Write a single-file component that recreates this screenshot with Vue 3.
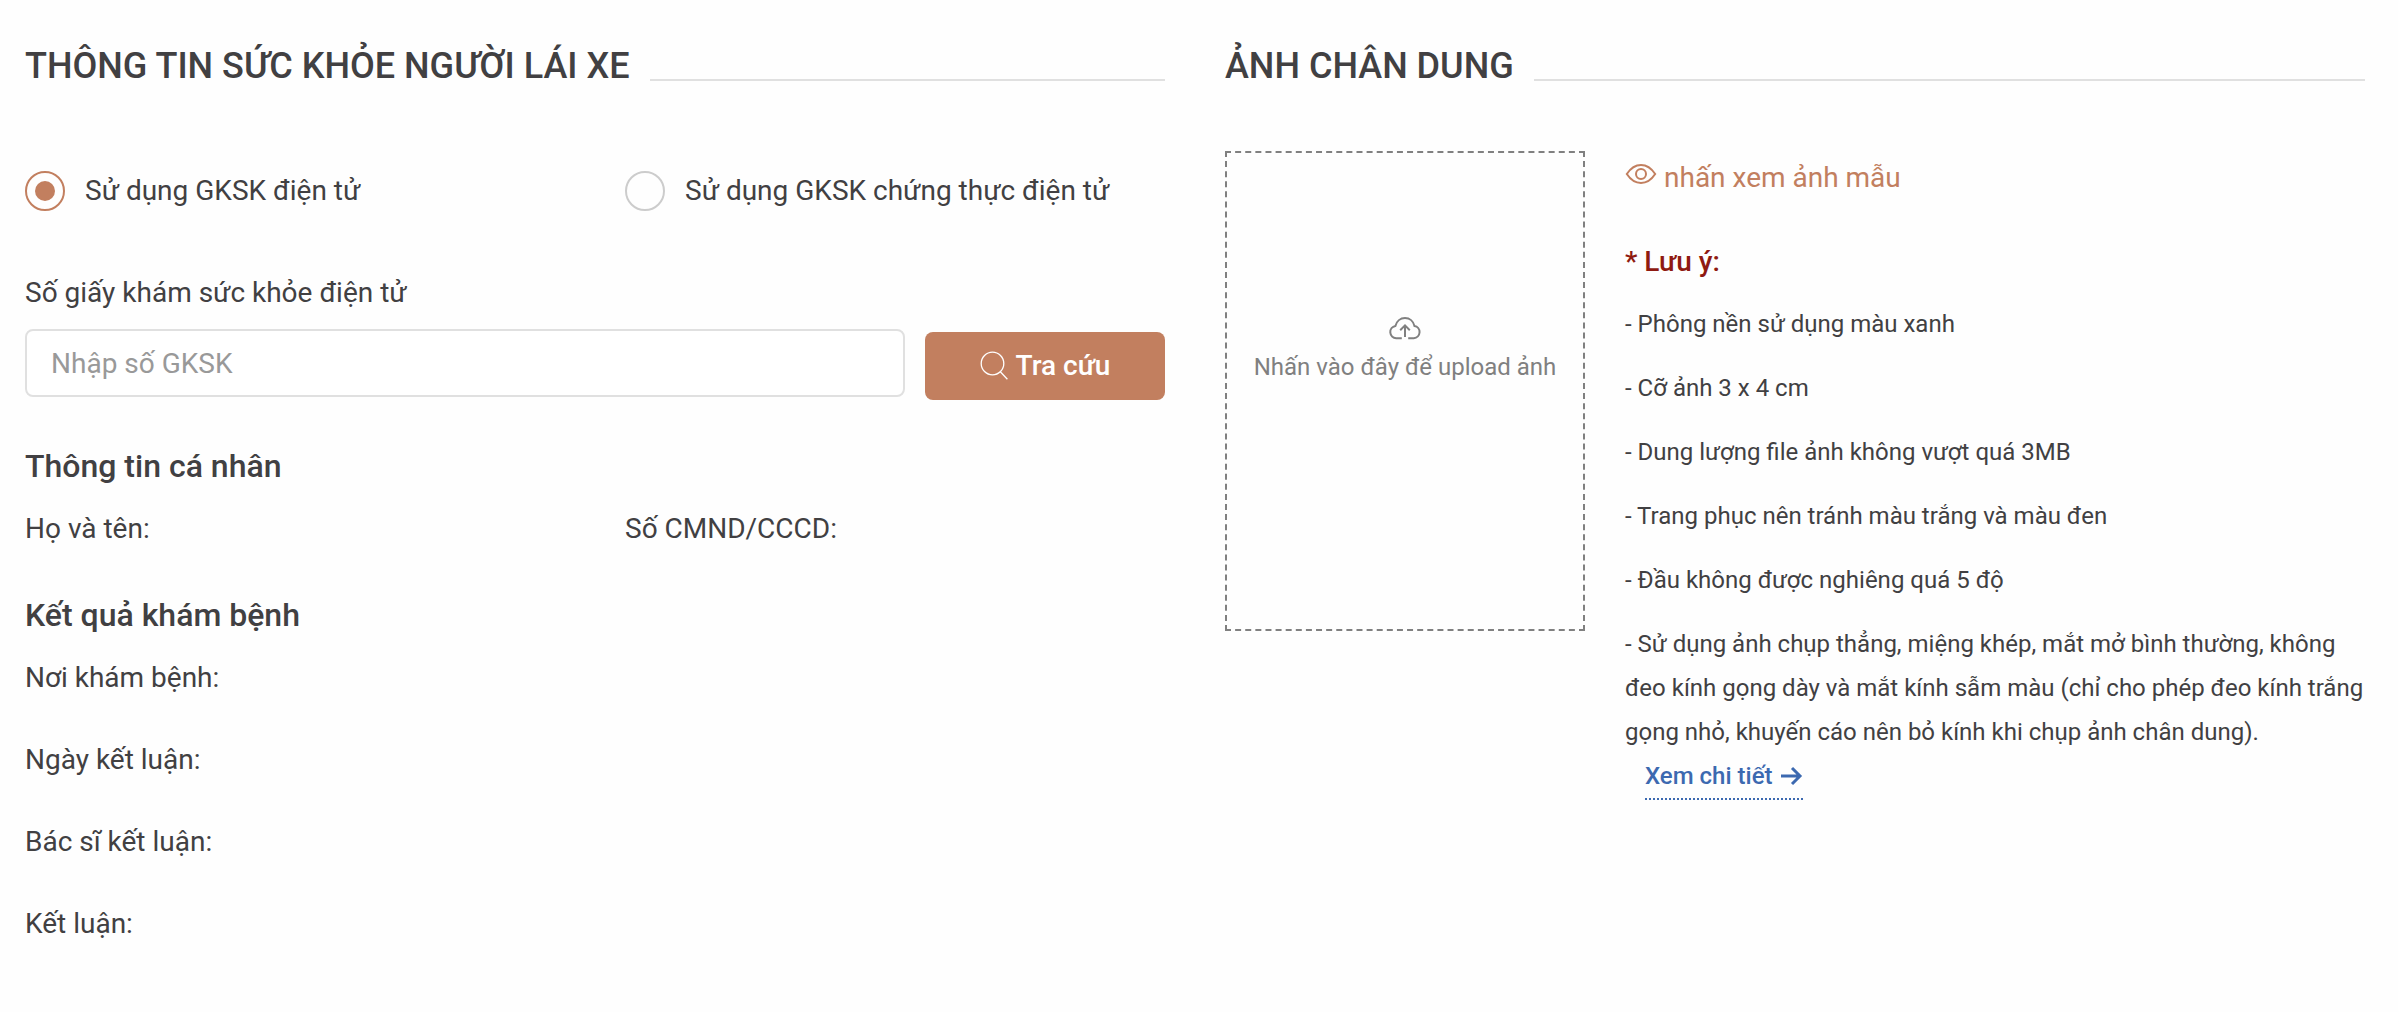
<template>
  <div class="health-page">
    <section>
      <div class="section-title">
        <h2>THÔNG TIN SỨC KHỎE NGƯỜI LÁI XE</h2>
        <span class="line"></span>
      </div>

      <div class="two-cols radios">
        <label v-for="item in types" :key="item.value" class="radio">
          <input v-model="type" type="radio" name="type" :value="item.value" />
          <span>{{ item.label }}</span>
        </label>
      </div>

      <form class="search" @submit.prevent>
        <div class="field">
          <label for="gksk">Số giấy khám sức khỏe điện tử</label>
          <input id="gksk" v-model="code" type="text" placeholder="Nhập số GKSK" />
        </div>
        <button type="submit" class="btn-search">
          <svg width="28" height="30" viewBox="0 0 28 30" aria-hidden="true">
            <circle cx="12.5" cy="12.5" r="11.3" />
            <path d="M20.3 20.8L27.4 28.2" />
          </svg>
          Tra cứu
        </button>
      </form>

      <h3>Thông tin cá nhân</h3>
      <div class="two-cols">
        <p>Họ và tên:</p>
        <p>Số CMND/CCCD:</p>
      </div>

      <h3>Kết quả khám bệnh</h3>
      <div class="results">
        <p v-for="text in results" :key="text">{{ text }}</p>
      </div>
    </section>

    <section>
      <div class="section-title">
        <h2>ẢNH CHÂN DUNG</h2>
        <span class="line"></span>
      </div>

      <div class="portrait">
        <label class="upload">
          <input type="file" accept="image/*" />
          <svg width="32" height="24" viewBox="0 0 32 24" aria-hidden="true">
            <path
              d="M12.8 21.2H7.2A6.2 6.2 0 0 1 6.4 8.9C7.6 4.2 11.4 1 16 1s8.4 3.2 9.4 7.9a6.2 6.2 0 0 1-.6 12.3h-5.6"
            />
            <path d="M16 20V8.6M11.2 13.2L16 8.4l4.8 4.8" />
          </svg>
          <span>Nhấn vào đây để upload ảnh</span>
        </label>

        <div class="guide">
          <button type="button" class="btn-sample">
            <svg width="32" height="32" viewBox="0 0 32 32" aria-hidden="true">
              <path d="M1.8 16C5.8 10 10.6 7 16 7s10.2 3 14.2 9C26.2 22 21.4 25 16 25S5.8 22 1.8 16z" />
              <circle cx="16" cy="16" r="5" />
            </svg>
            nhấn xem ảnh mẫu
          </button>
          <p class="note">* Lưu ý:</p>
          <ul>
            <li v-for="rule in rules" :key="rule">- {{ rule }}</li>
          </ul>
          <a href="#" class="detail">
            Xem chi tiết
            <svg width="23" height="20" viewBox="0 0 23 20" aria-hidden="true">
              <path d="M1 10h19M12 2l8 8-8 8" />
            </svg>
          </a>
        </div>
      </div>
    </section>
  </div>
</template>

<script setup>
import { ref } from "vue";

const type = ref("electronic");
const code = ref("");

const types = [
  { value: "electronic", label: "Sử dụng GKSK điện tử" },
  { value: "certified", label: "Sử dụng GKSK chứng thực điện tử" },
];

const results = ["Nơi khám bệnh:", "Ngày kết luận:", "Bác sĩ kết luận:", "Kết luận:"];

const rules = [
  "Phông nền sử dụng màu xanh",
  "Cỡ ảnh 3 x 4 cm",
  "Dung lượng file ảnh không vượt quá 3MB",
  "Trang phục nên tránh màu trắng và màu đen",
  "Đầu không được nghiêng quá 5 độ",
  "Sử dụng ảnh chụp thẳng, miệng khép, mắt mở bình thường, không đeo kính gọng dày và mắt kính sẫm màu (chỉ cho phép đeo kính trắng gọng nhỏ, khuyến cáo nên bỏ kính khi chụp ảnh chân dung).",
];
</script>

<style>
body {
  background: #fefefe;
}
</style>

<style scoped>
.health-page {
  display: grid;
  grid-template-columns: 1fr 1fr;
  gap: 60px;
  padding: 44px 33px 38px 25px;
  font-family: Roboto, sans-serif;
  font-size: 28px;
  line-height: 40px;
  color: #414042;
}

h2,
h3,
p,
ul {
  margin: 0;
  padding: 0;
}

input,
button {
  font: inherit;
  box-sizing: border-box;
  margin: 0;
}

svg {
  flex: none;
  fill: none;
  stroke: currentColor;
  stroke-width: 2;
}

.section-title {
  display: flex;
  align-items: flex-end;
  gap: 20px;
  margin-bottom: 63px;
}

h2 {
  font-size: 36px;
  line-height: 44px;
  font-weight: 500;
}

.line {
  flex: 1;
  height: 2px;
  margin-bottom: 7px;
  background: #e0e0e0;
}

.two-cols {
  display: grid;
  grid-template-columns: 1fr 1fr;
  gap: 60px;
}

.radios {
  padding: 20px 0 62px;
}

.radio {
  display: flex;
  align-items: center;
  gap: 20px;
  cursor: pointer;
}

.radio input {
  appearance: none;
  flex: none;
  display: grid;
  place-items: center;
  width: 40px;
  height: 40px;
  border: 2px solid #cccccc;
  border-radius: 50%;
}

.radio input:checked {
  border-color: #c27f5f;
}

.radio input:checked::before {
  content: "";
  width: 20px;
  height: 20px;
  border-radius: 50%;
  background: #c27f5f;
}

.search {
  display: flex;
  align-items: flex-end;
  gap: 20px;
}

.field {
  flex: 1;
  display: flex;
  flex-direction: column;
  gap: 16px;
  padding-bottom: 3px;
}

.field input {
  width: 100%;
  height: 68px;
  padding: 0 24px;
  border: 2px solid #e0e0e0;
  border-radius: 8px;
  background: #fff;
  color: inherit;
}

.field input::placeholder {
  color: #999999;
  opacity: 1;
}

.btn-search {
  display: flex;
  align-items: center;
  justify-content: center;
  gap: 8px;
  width: 240px;
  height: 68px;
  padding: 0;
  border: none;
  border-radius: 8px;
  background: #c27f5f;
  color: #fff;
  font-weight: 500;
  cursor: pointer;
}

.btn-search svg {
  stroke-width: 1.3;
}

h3 {
  margin: 46px 0 23px;
  font-size: 32px;
  font-weight: 500;
}

.results {
  display: grid;
  gap: 42px;
}

.portrait {
  display: flex;
  align-items: flex-start;
  gap: 40px;
}

.upload {
  flex: none;
  display: flex;
  flex-direction: column;
  align-items: center;
  gap: 8px;
  box-sizing: border-box;
  width: 360px;
  height: 480px;
  padding-top: 164px;
  border: 2px dashed #808080;
  font-size: 24px;
  line-height: 36px;
  color: #808080;
  cursor: pointer;
}

.upload input {
  position: absolute;
  width: 1px;
  height: 1px;
  opacity: 0;
}

.guide {
  flex: 1;
  padding-top: 7px;
}

.btn-sample {
  display: flex;
  align-items: flex-start;
  gap: 7px;
  padding: 0;
  border: none;
  background: none;
  color: #c27f5f;
  cursor: pointer;
}

.note {
  margin: 44px 0 20px;
  font-weight: 500;
  color: #8f1a11;
}

ul {
  display: grid;
  gap: 20px;
  list-style: none;
  font-size: 24px;
  line-height: 44px;
}

.detail {
  display: flex;
  align-items: center;
  gap: 8px;
  width: fit-content;
  margin-left: 20px;
  border-bottom: 2px dotted #3c69b0;
  font-size: 24px;
  line-height: 44px;
  font-weight: 500;
  color: #3c69b0;
  text-decoration: none;
}

.detail svg {
  stroke-width: 3;
}
</style>
